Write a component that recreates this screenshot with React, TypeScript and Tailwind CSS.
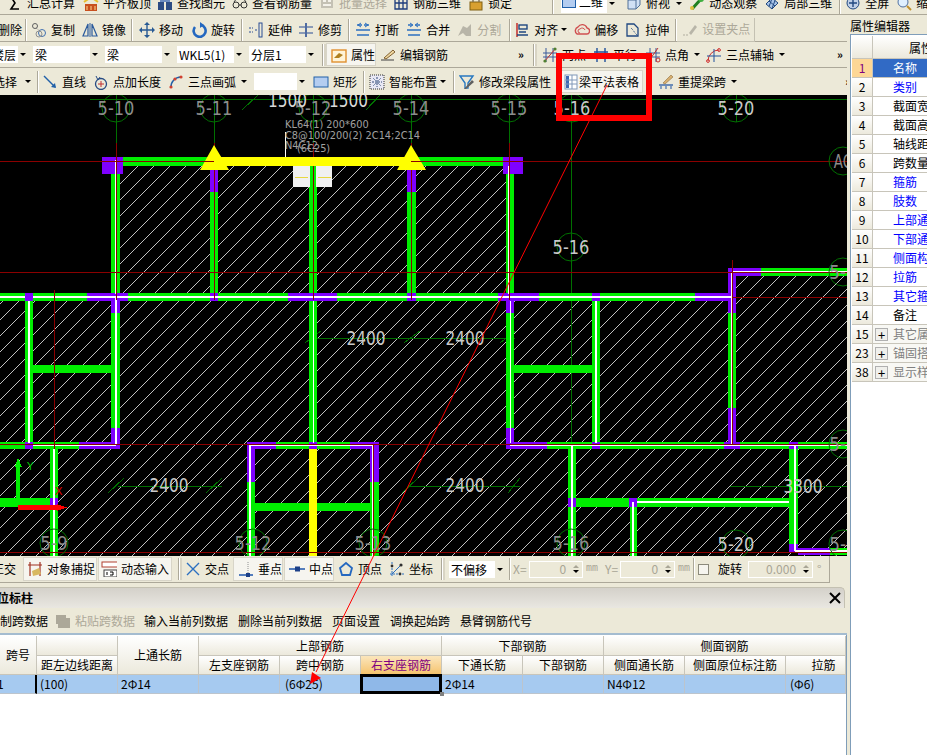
import React from 'react';

const cx = (...parts: (string | false | undefined)[]) => parts.filter(Boolean).join(' ');

// ---- small toolbar icons, all on a 16 box ----
const Svg = ({ children }: { children: React.ReactNode }) => (
  <svg viewBox="0 0 16 16" className="w-4 h-4 shrink-0" fill="none">{children}</svg>
);

const icons: Record<string, React.ReactNode> = {
  sigma: <path d="M12 2H4l4 6-4 6h8" stroke="#000" strokeWidth="1.6" />,
  level: <><rect x="2" y="9" width="12" height="7" fill="#c8501e" /><path d="M1 7l7-5 7 5" stroke="#e8c030" strokeWidth="2" /><path d="M4 11v4M8 11v4M12 11v4" stroke="#ffd890" /></>,
  find: <><rect x="1" y="7" width="6" height="8" fill="#2c4c84" /><rect x="9" y="7" width="6" height="8" fill="#2c4c84" /><rect x="3" y="2" width="10" height="5" fill="#6c8cc0" /></>,
  glasses: <><circle cx="4" cy="10" r="3" stroke="#333" /><circle cx="12" cy="10" r="3" stroke="#333" /><path d="M7 10h2M2 7l3-4M14 7l-3-4" stroke="#333" /></>,
  batch: <><rect x="2" y="3" width="12" height="10" fill="#c4c1b4" /><path d="M4 6h3M9 6h3M4 10h8" stroke="#f4f2ea" strokeWidth="2" /></>,
  rebar3d: <><path d="M2 4h12v10H2zM2 8h12M6 4v10M10 4v10" stroke="#1c3c7c" strokeWidth="1.3" /></>,
  lock: <><rect x="2" y="7" width="12" height="8" fill="#d8a030" stroke="#806010" /><path d="M5 7V4a3 3 0 0 1 6 0v3" stroke="#807050" strokeWidth="1.4" /></>,
  cube: <><path d="M2 5l5-3h7v8l-4 4H2z" fill="#d0e0f4" stroke="#507098" /><path d="M2 5h8v9M10 5l4-3" stroke="#507098" /></>,
  orbit: <><path d="M3 14L12 4" stroke="#208020" strokeWidth="3" /><circle cx="12" cy="4" r="3" fill="#40b040" /><circle cx="3" cy="13" r="2" fill="#e0c040" /></>,
  local3d: <><path d="M2 9l6-6 6 5-6 6z" fill="#a8c4e8" stroke="#204880" /><path d="M5 6l6 5M8 3.5l-3 8M11 5.5l-3 8" stroke="#204880" /></>,
  fullscreen: <><circle cx="8" cy="8" r="6" fill="#c0d0e8" stroke="#204880" /><path d="M8 4v8M4 8h8" stroke="#204880" strokeWidth="1.4" /></>,
  zoom: <><circle cx="7" cy="7" r="5" fill="#e0f0ff" stroke="#5070a0" /><path d="M11 11l4 4" stroke="#c09030" strokeWidth="2" /></>,
  copy: <><circle cx="4" cy="4" r="2.5" stroke="#606060" /><circle cx="11" cy="11" r="3.5" stroke="#4070b0" /><path d="M5 6l4 3" stroke="#808080" strokeDasharray="1 1" /><circle cx="8" cy="12" r="3" stroke="#909090" /></>,
  mirror: <><path d="M6 2v12H1zM10 2v12h5z" stroke="#2a5a9c" strokeWidth="1.2" /><path d="M8 1v14" stroke="#2a5a9c" /></>,
  move: <><path d="M8 1v14M1 8h14" stroke="#285a94" strokeWidth="1.4" /><path d="M8 0l3 3H5zM8 16l3-3H5zM0 8l3-3v6zM16 8l-3-3v6z" fill="#285a94" /></>,
  rotate: <><path d="M4 5a6 6 0 1 0 6-2" stroke="#2468c0" strokeWidth="2.6" /><path d="M9 0l4 3-4 3z" fill="#2468c0" /></>,
  extend: <><path d="M1 6h4M1 10h4M7 8h3" stroke="#284c94" strokeWidth="1.2" strokeDasharray="2 1" /><rect x="11" y="1" width="3" height="14" stroke="#284c94" /></>,
  trim: <><path d="M1 5h6M1 11h6M9 5h6M9 11h6" stroke="#284c94" strokeWidth="1.2" /><path d="M8 1v14" stroke="#284c94" strokeWidth="1.6" /></>,
  breakIcon: <><path d="M2 3h5M9 3h5M1 8h14M2 13h12" stroke="#2c70c0" strokeWidth="1.6" /><path d="M6 1l-3 2 3 2M10 1l3 2-3 2" stroke="#2c70c0" /></>,
  merge: <><path d="M2 3h4M10 3h4M1 8h14M2 13h12" stroke="#2c70c0" strokeWidth="1.6" /><path d="M4 1l3 2-3 2M12 1L9 3l3 2" stroke="#2c70c0" /></>,
  split: <><path d="M1 14L6 4l4 2 4-4v12H9l-3-3z" fill="#b8b5a8" /></>,
  align: <><path d="M3 1v14" stroke="#c02020" strokeWidth="1.4" /><rect x="5" y="3" width="8" height="4" stroke="#204880" strokeWidth="1.4" /><path d="M3 13h11M5 10h7" stroke="#204880" strokeWidth="1.4" /></>,
  offset: <><path d="M3 12a4 4 0 0 1 1-7 5 5 0 0 1 9 1 3 3 0 0 1-1 6z" stroke="#d05050" strokeWidth="1.4" /><path d="M6 11a2 2 0 0 1 0-4 3 3 0 0 1 5 1" stroke="#d05050" /></>,
  stretch: <><path d="M2 2h7l4 4v8H2z" stroke="#204880" strokeWidth="1.3" /><path d="M6 6l2 2 2 3 2 2" stroke="#204880" strokeDasharray="1 1" /></>,
  grip: <><path d="M1 14h6" stroke="#b0ad9f" strokeDasharray="2 1" /><path d="M7 12l6-8 2 2-6 8z" fill="#b8b5a8" /></>,
  attr: <><rect x="1" y="3" width="14" height="12" fill="#fff4d8" stroke="#e09030" strokeWidth="1.4" /><path d="M3 11l5-5 4 2-4 3z" fill="#b08020" /></>,
  editBar: <><path d="M1 13h13" stroke="#404040" /><path d="M4 11L13 3l2 2-9 7z" fill="#f0d8a0" stroke="#806030" /></>,
  twoPoint: <><path d="M1 10h14M1 6h14M4 1v14M11 1v14" stroke="#3a5a9a" /><path d="M2 15L14 1" stroke="#c03030" /><circle cx="13" cy="2" r="1.6" fill="#508030" /><circle cx="3" cy="14" r="1.6" fill="#508030" /></>,
  parallel: <><path d="M1 5h14M1 10h14M4 1v14M12 1v14" stroke="#20509c" strokeWidth="1.4" /></>,
  angle: <><path d="M1 6h14M1 10h14M5 1v14M11 1v14" stroke="#3a5a9a" /><path d="M3 15L13 1" stroke="#c03030" /><circle cx="13" cy="13" r="2" stroke="#c03030" /></>,
  arcAxis: <><path d="M2 14A11 11 0 0 1 13 3" stroke="#d03030" /><path d="M1 9h14M8 2v13" stroke="#20509c" /><circle cx="13" cy="3" r="1.4" stroke="#d03030" /><circle cx="2" cy="14" r="1.4" stroke="#d03030" /></>,
  line: <><path d="M2 2l11 11" stroke="#2060a8" strokeWidth="1.4" /><path d="M14 14l-5-1 4-4z" fill="#2060a8" /></>,
  pointLength: <><circle cx="8" cy="10" r="5.5" stroke="#284c84" strokeWidth="1.3" /><path d="M8 7v6M5 10h6" stroke="#c03030" /><path d="M3 2l2 4 2-3" stroke="#284c84" /></>,
  arc: <><path d="M3 14A10 10 0 0 1 13 3" stroke="#2060a8" strokeWidth="1.4" /><circle cx="3" cy="13" r="1.6" fill="#d04030" /><circle cx="7" cy="5" r="1.6" fill="#d04030" /><circle cx="13" cy="3" r="1.6" fill="#d04030" /></>,
  rect: <rect x="1" y="3" width="14" height="10" fill="#b4cdf0" stroke="#2060a8" />,
  smart: <><rect x="1" y="1" width="14" height="14" fill="#e8e8f4" stroke="#303030" strokeDasharray="1 1" /><path d="M8 3v10M3 8h10" stroke="#304878" strokeDasharray="2 1" /><path d="M4 4l8 8M12 4l-8 8" stroke="#8090b0" /></>,
  editSeg: <><path d="M1 2h13l-5 7v5H6V9z" stroke="#2878c0" strokeWidth="1.4" /><path d="M5 15l8-9 2 2-8 7z" fill="#606060" /></>,
  table: <><rect x="2" y="1" width="12" height="14" fill="#fff" stroke="#8098b8" /><rect x="3" y="2" width="3" height="12" fill="#3c68b4" /><path d="M2 6h12M2 10h12M9 1v14" stroke="#8098b8" /></>,
  lift: <><path d="M1 11h14" stroke="#6c8cb8" strokeWidth="2" /><path d="M3 15v-4M8 15v-4M13 15v-4" stroke="#6c8cb8" strokeWidth="1.6" /><path d="M5 9l8-8 2 2-8 7z" fill="#d8b070" stroke="#907040" strokeWidth=".6" /></>,
  snap: <><path d="M3 1v14M13 1v14M1 4h14" stroke="#a03020" strokeWidth="1.2" /><path d="M5 10l7-3 2 6-8 2z" fill="#d8b860" /></>,
  dyn: <><rect x="1" y="1" width="16" height="5" fill="#fff" stroke="#b04030" /><rect x="3" y="9" width="13" height="7" fill="#fff" stroke="#404040" /><path d="M6 11v3M9 11h3v3h-3" stroke="#000" /></>,
  cross: <path d="M2 2l12 12M14 2L2 14" stroke="#2c70c0" strokeWidth="1.4" />,
  perp: <><path d="M1 14h14" stroke="#2c60b0" strokeWidth="1.6" /><path d="M10 1v13" stroke="#909090" strokeDasharray="1 1" /><rect x="8" y="12" width="4" height="4" fill="#1c4088" /></>,
  mid: <><path d="M0 8h16" stroke="#2c60b0" strokeWidth="1.6" /><rect x="6" y="5.5" width="5" height="5" fill="#1c4088" /></>,
  vertex: <path d="M8 2l6 5-2 7H4L2 7z" stroke="#2468c0" strokeWidth="1.8" />,
  coord: <><path d="M3 1v14M1 13h14" stroke="#2c70c0" strokeDasharray="2 1" /><path d="M3 13l9-9" stroke="#2c70c0" /><circle cx="12" cy="4" r="1.6" fill="#303030" /><circle cx="3" cy="5" r="1.4" fill="#303030" /><circle cx="11" cy="13" r="1.4" fill="#303030" /></>,
  paste: <><path d="M1 2h10v3h4v10H3V11H1z" fill="#aca899" /></>,
};

const Caret = ({ className }: { className?: string }) => (
  <span className={cx('w-0 h-0 shrink-0 border-x-[3px] border-x-transparent border-t-[3px] border-t-black', className)} />
);

const Sep = ({ className, grip }: { className?: string; grip?: boolean }) => (
  <span className={cx('shrink-0 h-[22px] w-[2px] border-l border-l-[#aca899] border-r border-r-white', grip && 'shadow-[2px_0_0_#d8d4c4]', className)} />
);

const Tool = ({ icon, label, className, off }: { icon: string; label: string; className?: string; off?: boolean }) => (
  <div className={cx('flex items-center shrink-0', className)}>
    <Svg>{icons[icon]}</Svg>
    <span className={cx('ml-1 whitespace-nowrap', off && 'text-[#aca899]')}>{label}</span>
  </div>
);

const Combo = ({ text, className, textClass, children }: { text?: string; className?: string; textClass?: string; children?: React.ReactNode }) => (
  <div className={cx('flex h-[17px] shrink-0 bg-white overflow-hidden', className)}>
    {children}
    <span className={cx('flex-1 pl-[2px] leading-[17px] whitespace-nowrap overflow-hidden', textClass)}>{text}</span>
    <span className="w-[10px] bg-[#ece9d8] flex items-center justify-center"><Caret /></span>
  </div>
);

const More = ({ className }: { className?: string }) => (
  <span className={cx('shrink-0 text-[11px] font-bold w-[8px] leading-none', className)}>»</span>
);

const Spin = ({ value, className }: { value: string; className?: string }) => (
  <div className={cx('flex items-center justify-end h-[17px] shrink-0 border border-white text-[#a8a595] pr-[3px]', className)}>
    <span>{value}</span>
    <span className="ml-[7px] flex flex-col gap-[2px]"><span className="w-0 h-0 border-x-[3px] border-x-transparent border-b-[3px] border-b-[#a8a595]" /><Caret className="border-t-[#a8a595]" /></span>
  </div>
);

// ---- drawing data, in page coordinates ----
const GREEN = '#00ee00';
const PURPLE = '#7f00ff';
const YELLOW = '#ffff00';
const DK_RED = '#8b0000';
const AXIS = '#007000';

type R = [number, number, number, number, string];
const walls: R[] = [
  // top of the upper rooms
  [123, 157, 88, 9, GREEN], [415, 157, 88, 9, GREEN], [102, 157, 21, 17, PURPLE], [503, 157, 20, 17, PURPLE],
  [111, 174, 9, 120, GREEN], [210, 166, 8, 26, PURPLE], [210, 192, 8, 102, GREEN], [309, 166, 8, 128, GREEN],
  [407, 166, 9, 26, PURPLE], [407, 192, 9, 102, GREEN], [506, 174, 8, 120, GREEN],
  // y 297 beam
  [0, 293, 25, 8, GREEN], [25, 293, 8, 8, PURPLE], [33, 293, 54, 8, GREEN], [87, 293, 41, 8, PURPLE], [128, 293, 82, 8, GREEN],
  [210, 293, 8, 8, PURPLE], [218, 293, 70, 8, GREEN], [288, 293, 49, 8, PURPLE], [337, 293, 70, 8, GREEN], [407, 293, 9, 8, PURPLE],
  [416, 293, 82, 8, GREEN], [498, 293, 41, 8, PURPLE], [539, 293, 53, 8, GREEN], [592, 293, 8, 8, PURPLE], [600, 293, 95, 8, GREEN],
  [695, 293, 41, 8, PURPLE],
  // right room
  [728, 268, 33, 8, PURPLE], [761, 268, 86, 8, GREEN], [728, 276, 8, 37, PURPLE], [728, 313, 8, 95, GREEN], [728, 408, 8, 39, PURPLE],
  // middle band verticals
  [25, 301, 8, 142, GREEN], [111, 297, 9, 16, PURPLE], [111, 313, 9, 115, GREEN], [111, 428, 9, 15, PURPLE], [33, 365, 78, 8, GREEN],
  [309, 301, 8, 142, GREEN], [506, 301, 8, 12, PURPLE], [506, 313, 8, 115, GREEN], [506, 428, 8, 15, PURPLE],
  [592, 301, 8, 142, GREEN], [514, 365, 78, 8, GREEN],
  // y 445 beam
  [0, 442, 25, 7, GREEN], [25, 442, 8, 7, PURPLE], [33, 442, 46, 7, GREEN], [79, 442, 41, 7, PURPLE],
  [247, 442, 29, 7, PURPLE], [276, 442, 74, 7, GREEN], [350, 442, 29, 7, PURPLE], [309, 442, 8, 7, PURPLE],
  [506, 442, 41, 7, PURPLE], [547, 442, 45, 7, GREEN], [592, 442, 8, 7, PURPLE], [600, 442, 124, 7, GREEN], [724, 442, 16, 7, PURPLE],
  [740, 442, 49, 7, GREEN], [789, 442, 9, 7, PURPLE], [798, 442, 49, 7, GREEN],
  // lower band
  [50, 449, 8, 107, GREEN], [0, 498, 50, 9, GREEN], [50, 498, 8, 9, PURPLE],
  [247, 449, 8, 33, PURPLE], [247, 482, 8, 74, GREEN], [370, 449, 9, 33, PURPLE], [370, 482, 9, 74, GREEN], [255, 503, 115, 8, GREEN],
  [309, 449, 8, 107, YELLOW],
  [568, 449, 8, 49, GREEN], [568, 498, 8, 9, PURPLE], [568, 507, 8, 49, GREEN], [576, 498, 53, 9, GREEN], [629, 498, 8, 9, PURPLE],
  [637, 498, 152, 9, GREEN], [630, 507, 7, 49, GREEN], [789, 449, 9, 95, GREEN], [789, 544, 9, 9, PURPLE], [798, 548, 32, 7, PURPLE], [830, 548, 17, 7, GREEN],
];

const whiteLines: [number, number, number, number][] = [
  [116, 160, 116, 294], [509, 166, 509, 294], [33, 297, 732, 297], [0, 297, 25, 297],
  [29, 301, 29, 443], [116, 297, 116, 445], [596, 301, 596, 443], [732, 272, 732, 445], [732, 272, 847, 272],
  [33, 445, 116, 445], [250, 445, 373, 445], [510, 445, 847, 445],
  [54, 449, 54, 556], [250, 445, 250, 556], [373, 445, 373, 556], [572, 445, 572, 556],
  [637, 502, 789, 502], [633, 502, 633, 556], [795, 445, 795, 551], [795, 551, 847, 551],
];

// one pixel wide lines in the wall centres
const thinWhite: [number, number, number, number][] = [
  [313, 301, 313, 443], [510, 301, 510, 443],
];

const darkRed: [number, number, number, number][] = [
  [0, 161, 847, 161], [0, 272, 847, 272], [0, 444, 847, 444], [0, 552, 847, 552], [732, 297, 847, 297],
  [116, 143, 116, 300], [214, 143, 214, 300], [313, 143, 313, 300], [411, 143, 411, 300], [509, 143, 509, 300],
  [54, 290, 54, 449], [732, 260, 732, 445], [373, 445, 373, 556],
];

const bubbles: [number, number, string, string][] = [
  [116, 108, '5-10', '#8c8c8c'], [214, 108, '5-11', '#8c8c8c'], [313, 108, '5-12', '#8c8c8c'], [411, 108, '5-14', '#8c8c8c'],
  [509, 108, '5-15', '#8c8c8c'], [572, 108, '5-16', '#c8c8c8'], [736, 108, '5-20', '#c8c8c8'], [571, 247, '5-16', '#c8c8c8'],
  [54, 543, '5-9', '#8c8c8c'], [253, 543, '5-12', '#8c8c8c'], [373, 543, '5-13', '#8c8c8c'], [571, 543, '5-16', '#8c8c8c'], [736, 544, '5-20', '#c8c8c8'],
  [843, 161, 'AC', '#8c8c8c'], [843, 272, '5-1', '#8c8c8c'], [843, 444, '5-6', '#8c8c8c'], [843, 544, '5-0', '#8c8c8c'],
];

const dims: [number, number, string][] = [
  [366, 338, '2400'], [465, 338, '2400'], [169, 485, '2400'], [465, 485, '2400'], [803, 486, '3300'],
];

const thinGreen: [number, number, number, number][] = [
  [90, 99, 847, 99], [313, 338, 515, 338], [118, 486, 222, 486], [410, 486, 520, 486], [730, 486, 847, 486],
  [305, 343, 321, 331], [404, 343, 420, 331], [500, 343, 516, 331], [108, 493, 124, 478], [206, 493, 222, 478], [402, 493, 418, 478], [508, 493, 520, 478],
  [116, 95, 116, 143], [214, 95, 214, 143], [313, 95, 313, 143], [411, 95, 411, 143], [509, 95, 509, 143],
  [571, 95, 571, 556], [736, 95, 736, 122], [242, 110, 258, 95], [366, 110, 380, 95],
];

const Canvas = () => (
  <svg viewBox="0 95 847 461" className="block w-[847px] h-[461px] bg-black shrink-0" shapeRendering="crispEdges">
    <defs>
      <pattern id="hatch" width="16" height="16" patternUnits="userSpaceOnUse">
        <path d="M-1 17L17 -1" stroke="#c0c0c0" strokeWidth="1" />
      </pattern>
    </defs>
    <path d="M116 161H509V297H732V272H847V556H0V297H116Z" fill="url(#hatch)" />
    {thinGreen.map(([a, b, c, d], i) => <line key={i} x1={a} y1={b} x2={c} y2={d} stroke={AXIS} />)}
    {walls.map(([x, y, w, h, c], i) => <rect key={i} x={x} y={y} width={w} height={h} fill={c} />)}
    {whiteLines.map(([a, b, c, d], i) => <line key={i} x1={a} y1={b} x2={c} y2={d} stroke="#fff" strokeWidth="1.5" />)}
    {thinWhite.map(([a, b, c, d], i) => <line key={i} x1={a} y1={b} x2={c} y2={d} stroke="#fff" />)}
    {darkRed.map(([a, b, c, d], i) => <line key={i} x1={a} y1={b} x2={c} y2={d} stroke={DK_RED} />)}

    {/* selected beam */}
    <rect x="212" y="157" width="198" height="9" fill={YELLOW} />
    <path d="M214 145L229 170H200ZM411 145L426 170H397Z" fill={YELLOW} shapeRendering="auto" />
    <line x1="102" y1="161" x2="214" y2="161" stroke={DK_RED} />
    <line x1="411" y1="161" x2="523" y2="161" stroke={DK_RED} />
    <rect x="293" y="166" width="17" height="21" fill="#f0f0f0" />
    <rect x="316" y="166" width="16" height="21" fill="#f0f0f0" />
    <path d="M295 177H308M318 177H331" stroke="#e8d840" />
    <line x1="285.5" y1="132" x2="285.5" y2="157" stroke="#fff" />

    <g shapeRendering="auto" fontFamily="'DejaVu Sans', sans-serif">
      {bubbles.map(([x, y, t, c], i) => (
        <g key={i}>
          <circle cx={x} cy={y} r="14" fill="none" stroke={AXIS} />
          <text x={x} y={y + 7} fill={c} fontSize="19" textAnchor="middle" textLength={t.length * 9.2} lengthAdjust="spacingAndGlyphs">{t}</text>
        </g>
      ))}
      {dims.map(([x, y, t], i) => (
        <text key={i} x={x} y={y + 7} fill="#c8c8c8" fontSize="19" textAnchor="middle" textLength="39" lengthAdjust="spacingAndGlyphs">{t}</text>
      ))}
      <text x="268" y="107" fill="#d8d8d8" fontSize="19" textLength="39" lengthAdjust="spacingAndGlyphs">1500</text>
      <text x="329" y="107" fill="#d8d8d8" fontSize="19" textLength="39" lengthAdjust="spacingAndGlyphs">1500</text>
      <g fill="#a0a0a0" fontSize="9.8">
        <text x="285" y="128">KL64(1) 200*600</text>
        <text x="285" y="139">C8@100/200(2) 2C14;2C14</text>
        <text x="285" y="149">N4C12</text>
        <text x="297" y="152">(6C25)</text>
      </g>
      {/* world axes */}
      <text x="27" y="470" fill="#00c000" fontSize="11">Y</text>
      <text x="55" y="495" fill="#e00000" fontSize="11">X</text>
    </g>
    <path d="M16 507V467H15L18 458L22 467H20V507Z" fill="#00ee00" />
    <path d="M18 505H57V504L67 507.5L57 511V510H18Z" fill="#ff0000" />
  </svg>
);

// ---- bottom table ----
const headCell = 'flex items-center justify-center border-r border-b border-[#c8c5ba] bg-gradient-to-b from-white to-[#ece9dc] whitespace-nowrap overflow-hidden';
const dataCell = 'flex items-center border-r border-b border-[#bcc4cc] bg-[#a6caf0] pl-[3px] whitespace-nowrap overflow-hidden';

const RebarTable = () => (
  <div className="relative grid grid-cols-[37px_81px_81px_81px_81px_81px_81px_81px_81px_101px_60px] grid-rows-[20px_19px_19px] w-[846px] mt-[1px]">
    <div className={cx(headCell, 'row-span-2')}>跨号</div>
    <div className={headCell} />
    <div className={cx(headCell, 'row-span-2')}>上通长筋</div>
    <div className={cx(headCell, 'col-span-3')}>上部钢筋</div>
    <div className={cx(headCell, 'col-span-2')}>下部钢筋</div>
    <div className={cx(headCell, 'col-span-3')}>侧面钢筋</div>

    <div className={headCell}>距左边线距离</div>
    <div className={headCell}>左支座钢筋</div>
    <div className={headCell}>跨中钢筋</div>
    <div className="flex items-center justify-center border-r border-b border-[#c8c5ba] bg-gradient-to-b from-[#fbe6bc] to-[#f5c36c] text-[#800080]">右支座钢筋</div>
    <div className={headCell}>下通长筋</div>
    <div className={headCell}>下部钢筋</div>
    <div className={headCell}>侧面通长筋</div>
    <div className={headCell}>侧面原位标注筋</div>
    <div className={cx(headCell, 'pl-4')}>拉筋</div>

    <div className="flex items-center bg-[#a6caf0] border-r-2 border-r-black border-b border-b-[#bcc4cc] -ml-[3px]">1</div>
    <div className={dataCell}>(100)</div>
    <div className={dataCell}>2Φ14</div>
    <div className={dataCell} />
    <div className={cx(dataCell, 'pl-[5px]')}>(6Φ25)</div>
    <div className="border-[3px] border-black bg-[#8fb8e8] -ml-px -mt-px" />
    <div className={dataCell}>2Φ14</div>
    <div className={dataCell} />
    <div className={dataCell}>N4Φ12</div>
    <div className={dataCell} />
    <div className={cx(dataCell, 'pl-[4px]')}>(Φ6)</div>
    <span className="absolute left-[440px] top-[56px] w-[4px] h-[4px] bg-[#808080]" />
  </div>
);

// ---- property panel on the right ----
const propRows: { no: string; name: string; kind?: 'link' | 'sel' | 'group' }[] = [
  { no: '1', name: '名称', kind: 'sel' },
  { no: '2', name: '类别', kind: 'link' },
  { no: '3', name: '截面宽度' },
  { no: '4', name: '截面高度' },
  { no: '5', name: '轴线距梁左边线' },
  { no: '6', name: '跨数量' },
  { no: '7', name: '箍筋', kind: 'link' },
  { no: '8', name: '肢数', kind: 'link' },
  { no: '9', name: '上部通长筋', kind: 'link' },
  { no: '10', name: '下部通长筋', kind: 'link' },
  { no: '11', name: '侧面构造筋', kind: 'link' },
  { no: '12', name: '拉筋', kind: 'link' },
  { no: '13', name: '其它箍筋', kind: 'link' },
  { no: '14', name: '备注' },
  { no: '15', name: '其它属性', kind: 'group' },
  { no: '23', name: '锚固搭接', kind: 'group' },
  { no: '38', name: '显示样式', kind: 'group' },
];

const PropPanel = () => (
  <div className="w-[80px] flex flex-col pl-[3px] bg-[#ece9d8]">
    <div className="h-[19px] leading-[19px] pt-[1px] whitespace-nowrap overflow-hidden">属性编辑器</div>
    <div className="flex-1 bg-white border-l border-t border-[#7f9db9] pl-px overflow-hidden">
      <div className="flex h-[23px] mt-px border-b border-[#c8c5ba]">
        <div className="w-[21px] shrink-0 border-r border-[#c8c5ba] bg-gradient-to-b from-white to-[#ece9dc]" />
        <div className="flex-1 pl-[36px] leading-[23px] whitespace-nowrap overflow-hidden bg-gradient-to-b from-white to-[#ece9dc]">属性名称</div>
      </div>
      {propRows.map((r) => (
        <div key={r.no} className="flex h-[19px] border-b border-[#c8c5ba]">
          <div className={cx(
            'w-[21px] shrink-0 flex items-center justify-center border-r border-[#c8c5ba]',
            r.kind === 'sel' ? 'bg-[#fdd796] text-[#800080]' : 'bg-gradient-to-b from-white to-[#ece9dc]',
          )}>{r.no}</div>
          <div className={cx(
            'flex-1 flex items-center whitespace-nowrap overflow-hidden',
            r.kind === 'sel' && 'bg-[#316ac5] text-white pl-5',
            r.kind === 'link' && 'text-[#0000ff] pl-5',
            r.kind === 'group' && 'text-[#808080] pl-[2px] bg-[#f8f8f4]',
            !r.kind && 'pl-5',
          )}>
            {r.kind === 'group' && (
              <span className="w-[13px] h-[13px] shrink-0 mr-[5px] border border-[#b0b0b0] bg-[#f0f0ec] flex items-center justify-center text-black text-[13px] leading-none">+</span>
            )}
            {r.name}
          </div>
        </div>
      ))}
    </div>
  </div>
);

export default function App() {
  return (
    <div className="relative w-[927px] h-[755px] overflow-hidden bg-white text-black text-[12px] leading-none font-['Noto_Sans_CJK_SC','Liberation_Sans',sans-serif]">
      {/* row 1, cut off by the top of the window */}
      <div className="h-[15px] overflow-hidden bg-[#ece9d8] border-b border-[#aca899]">
        <div className="flex items-center h-[20px] -mt-[7px]">
          <Tool icon="sigma" label="汇总计算" className="ml-[7px]" />
          <Tool icon="level" label="平齐板顶" className="ml-[8px]" />
          <Tool icon="find" label="查找图元" className="ml-[6px]" />
          <Tool icon="glasses" label="查看钢筋量" className="ml-[7px]" />
          <Tool icon="batch" label="批量选择" className="ml-[7px]" off />
          <Tool icon="rebar3d" label="钢筋三维" className="ml-[6px]" />
          <Tool icon="lock" label="锁定" className="ml-[7px]" />
          <Sep className="ml-[40px]" />
          <Combo text="二维" className="ml-[7px] w-[56px] h-[20px]" textClass="pl-[3px]">
            <svg viewBox="0 0 14 14" className="w-[14px] h-[14px] mt-[1px] ml-[1px] shrink-0"><rect x=".5" y=".5" width="13" height="13" fill="#b4cdf0" stroke="#2060a8" /></svg>
          </Combo>
          <Tool icon="cube" label="俯视" className="ml-[9px]" />
          <Caret className="ml-[6px]" />
          <Tool icon="orbit" label="动态观察" className="ml-[7px]" />
          <Tool icon="local3d" label="局部三维" className="ml-[7px]" />
          <Sep className="ml-[7px]" />
          <Tool icon="fullscreen" label="全屏" className="ml-[4px]" />
          <Tool icon="zoom" label="缩放" className="ml-[7px]" />
        </div>
      </div>

      <div className="flex h-[740px]">
        <div className="w-[847px] shrink-0 flex flex-col bg-[#ece9d8] overflow-hidden">
          {/* row 2 */}
          <div className="flex items-center h-[27px] pt-[3px] shrink-0 border-b border-[#aca899]">
            <span className="-ml-[2px] shrink-0">删除</span>
            <Sep className="ml-[3px]" />
            <Tool icon="copy" label="复制" className="ml-[4px]" />
            <Tool icon="mirror" label="镜像" className="ml-[7px]" />
            <Sep className="ml-[5px]" />
            <Tool icon="move" label="移动" className="ml-[6px]" />
            <Tool icon="rotate" label="旋转" className="ml-[8px]" />
            <Sep className="ml-[6px]" />
            <Tool icon="extend" label="延伸" className="ml-[5px]" />
            <Tool icon="trim" label="修剪" className="ml-[6px]" />
            <Sep className="ml-[6px]" />
            <Tool icon="breakIcon" label="打断" className="ml-[5px]" />
            <Tool icon="merge" label="合并" className="ml-[7px]" />
            <Tool icon="split" label="分割" className="ml-[7px]" off />
            <Sep className="ml-[8px]" />
            <Tool icon="align" label="对齐" className="ml-[3px]" />
            <Caret className="ml-[3px]" />
            <Tool icon="offset" label="偏移" className="ml-[7px]" />
            <Tool icon="stretch" label="拉伸" className="ml-[7px]" />
            <Sep className="ml-[6px]" />
            <div className="flex items-center h-[24px] w-[78px] border-r border-b border-[#c4c1b2]">
              <Tool icon="grip" label="设置夹点" className="ml-[5px]" off />
            </div>
          </div>

          {/* row 3 */}
          <div className="flex items-center h-[26px] shrink-0 border-b border-[#aca899]">
            <Combo text="楼层" className="w-[28px]" textClass="-ml-[10px]" />
            <Combo text="梁" className="ml-[5px] w-[67px]" />
            <Combo text="梁" className="ml-[5px] w-[67px]" />
            <Combo text="WKL5(1)" className="ml-[5px] w-[67px]" />
            <Combo text="分层1" className="ml-[5px] w-[67px]" />
            <Sep className="ml-[6px]" grip />
            <Tool icon="attr" label="属性" className="ml-[2px] w-[50px] h-[23px] pl-[4px] bg-[#f6f5ef] border border-[#d8d5c8]" />
            <Tool icon="editBar" label="编辑钢筋" className="ml-[4px]" />
            <More className="ml-[70px]" />
            <Sep className="ml-[7px]" grip />
            <Tool icon="twoPoint" label="两点" className="ml-[7px]" />
            <Tool icon="parallel" label="平行" className="ml-[7px]" />
            <Tool icon="angle" label="点角" className="ml-[8px]" />
            <Caret className="ml-[5px]" />
            <Tool icon="arcAxis" label="三点辅轴" className="ml-[6px]" />
            <Caret className="ml-[5px]" />
            <More className="ml-[52px]" />
          </div>

          {/* row 4 */}
          <div className="flex items-center h-[27px] shrink-0">
            <span className="-ml-[7px] shrink-0">选择</span>
            <Caret className="ml-[8px]" />
            <Sep className="ml-[6px]" />
            <Tool icon="line" label="直线" className="ml-[3px]" />
            <Tool icon="pointLength" label="点加长度" className="ml-[7px]" />
            <Tool icon="arc" label="三点画弧" className="ml-[7px]" />
            <Caret className="ml-[5px]" />
            <Combo className="ml-[7px] w-[53px]" />
            <Tool icon="rect" label="矩形" className="ml-[6px]" />
            <Sep className="ml-[6px]" />
            <Tool icon="smart" label="智能布置" className="ml-[4px]" />
            <Caret className="ml-[3px]" />
            <Sep className="ml-[7px]" />
            <Tool icon="editSeg" label="修改梁段属性" className="ml-[4px]" />
            <Tool icon="table" label="梁平法表格" className="ml-[6px] w-[86px] h-[23px] pl-[5px] bg-[#f6f5ef] border border-[#d8d5c8] [&>span]:ml-0" />
            <Caret className="ml-[3px]" />
            <Tool icon="lift" label="重提梁跨" className="ml-[6px]" />
            <Caret className="ml-[5px]" />
            <More className="ml-[108px]" />
          </div>

          <Canvas />

          {/* snap bar */}
          <div className="flex items-center h-[27px] w-[830px] shrink-0 border-b border-r border-[#aca899]">
            <span className="-ml-[8px] shrink-0">正交</span>
            <Tool icon="snap" label="对象捕捉" className="ml-[7px] w-[74px] h-[24px] pl-[3px] bg-[#f6f5ef] border border-[#d8d5c8]" />
            <Tool icon="dyn" label="动态输入" className="ml-[1px] w-[74px] h-[24px] pl-[2px] bg-[#f6f5ef] border border-[#d8d5c8]" />
            <Sep className="ml-[6px]" grip />
            <Tool icon="cross" label="交点" className="ml-[5px]" />
            <Tool icon="perp" label="垂点" className="ml-[4px] w-[50px] h-[24px] pl-[4px] bg-[#f6f5ef] border border-[#d8d5c8]" />
            <Tool icon="mid" label="中点" className="ml-[1px] w-[50px] h-[24px] pl-[4px] bg-[#f6f5ef] border border-[#d8d5c8]" />
            <Tool icon="vertex" label="顶点" className="ml-[4px]" />
            <Tool icon="coord" label="坐标" className="ml-[7px]" />
            <Sep className="ml-[8px]" grip />
            <Combo text="不偏移" className="ml-[6px] w-[56px]" />
            <Sep className="ml-[4px]" />
            <span className="ml-[2px] w-[14px] shrink-0 text-[#a8a595]">X=</span>
            <Spin value="0" className="ml-[2px] w-[54px]" />
            <span className="ml-[3px] w-[12px] shrink-0 text-[10px] font-['Liberation_Mono',monospace] text-[#a8a595]">mm</span>
            <span className="ml-[7px] w-[14px] shrink-0 text-[#a8a595]">Y=</span>
            <Spin value="0" className="ml-[1px] w-[55px]" />
            <span className="ml-[3px] w-[12px] shrink-0 text-[10px] font-['Liberation_Mono',monospace] text-[#a8a595]">mm</span>
            <Sep className="ml-[3px]" />
            <span className="ml-[3px] w-[11px] h-[11px] shrink-0 border border-[#8c8a7c] bg-[#f6f5ef]" />
            <span className="ml-[9px] shrink-0">旋转</span>
            <Spin value="0.000" className="ml-[6px] w-[65px]" />
            <span className="ml-[4px] text-[#a8a595]">°</span>
          </div>

          {/* table panel title */}
          <div className="flex items-center justify-between h-[21px] w-[845px] mt-[4px] shrink-0 overflow-hidden rounded-tr-[5px] border-t border-r border-[#c4c1b2] bg-gradient-to-b from-[#d4d1ca] to-[#e9e7e1]">
            <span className="-ml-[15px] font-bold whitespace-nowrap">定位标柱</span>
            <svg viewBox="0 0 12 12" className="w-3 h-3 mr-[3px]"><path d="M1 1l10 10M11 1L1 11" stroke="#000" strokeWidth="2" /></svg>
          </div>

          {/* table panel toolbar */}
          <div className="flex items-center h-[26px] mt-[1px] shrink-0 border-b-2 border-[#a4bcd0]">
            <span className="-ml-[12px] shrink-0">复制跨数据</span>
            <Tool icon="paste" label="粘贴跨数据" className="ml-[7px]" off />
            <span className="ml-[9px] shrink-0">输入当前列数据</span>
            <span className="ml-[10px] shrink-0">删除当前列数据</span>
            <span className="ml-[10px] shrink-0">页面设置</span>
            <span className="ml-[10px] shrink-0">调换起始跨</span>
            <span className="ml-[10px] shrink-0">悬臂钢筋代号</span>
          </div>

          <div className="flex-1 bg-white border-r border-[#7f9db9]">
            <RebarTable />
          </div>
        </div>
        <PropPanel />
      </div>

      {/* the red markup someone drew over the screenshot */}
      <div className="absolute left-[556px] top-[53px] w-[96px] h-[68px] border-[6px] border-[#ff0000] pointer-events-none" />
      <svg viewBox="0 0 927 755" className="absolute inset-0 w-[927px] h-[755px] pointer-events-none">
        <line x1="607" y1="85" x2="316" y2="672" stroke="#ff0000" />
        <path d="M310 684L312 672L321 678Z" fill="#ff0000" />
      </svg>
    </div>
  );
}
